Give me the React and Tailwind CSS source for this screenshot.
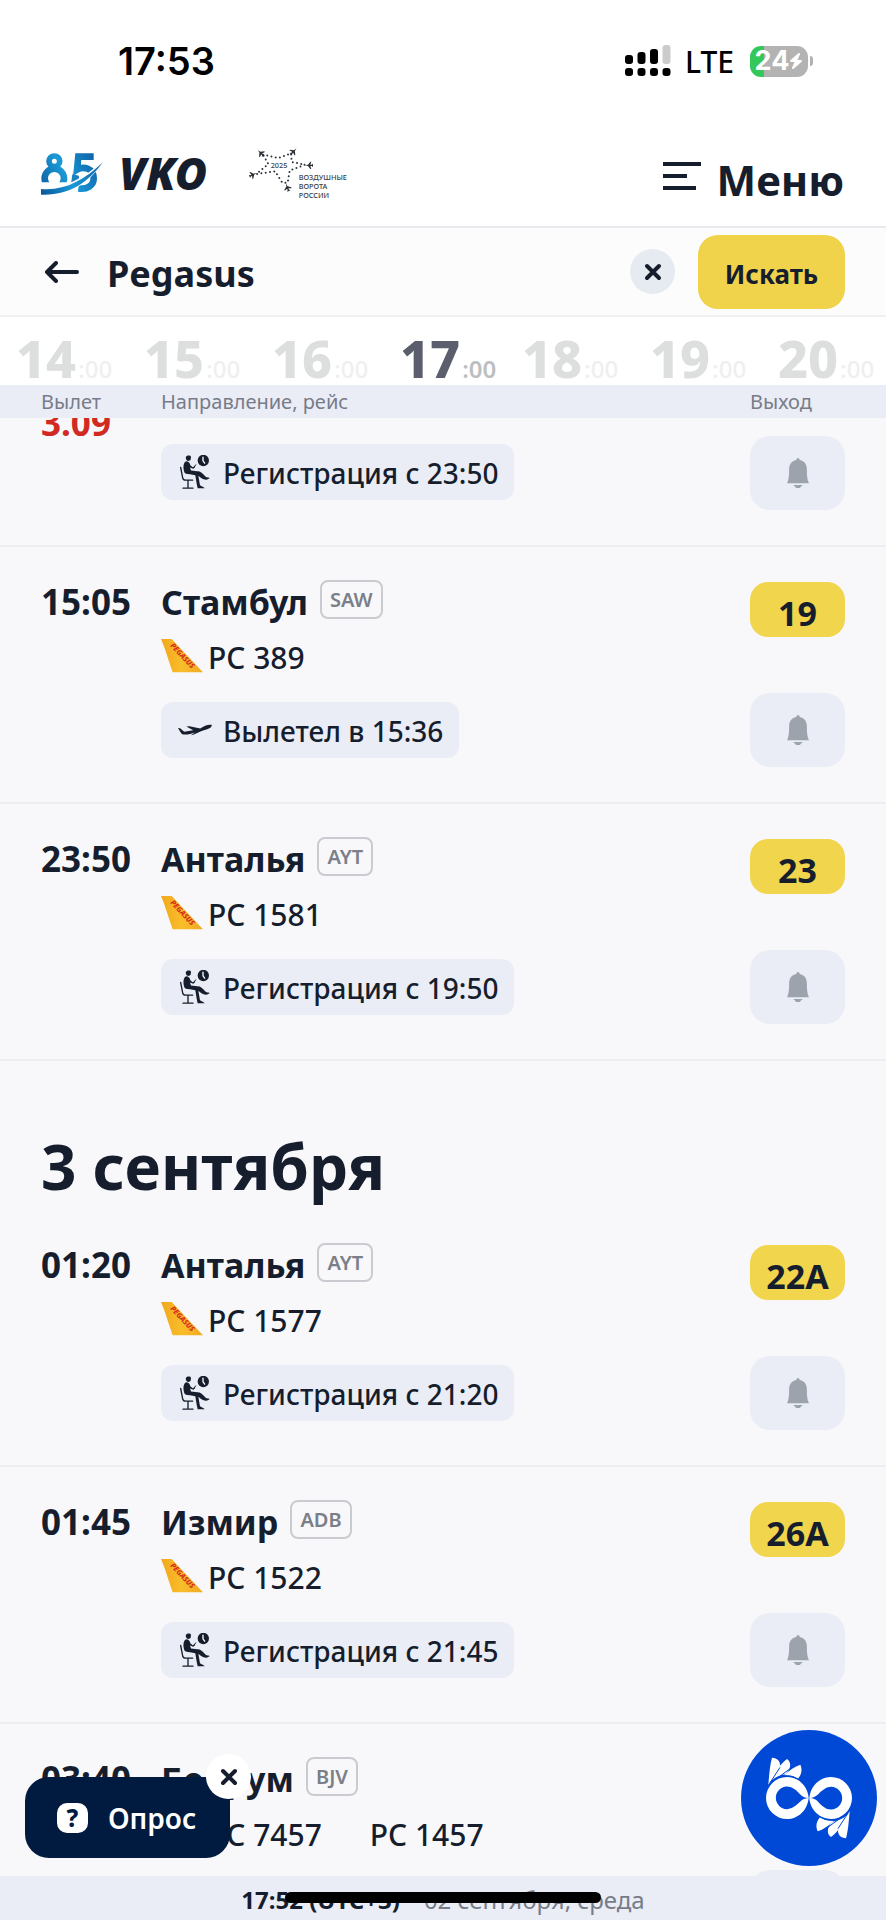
import React from 'react';
import { FaBolt } from 'react-icons/fa6';

const days = [
  {
    title: null,
    flights: [
      { time: '15:05', city: 'Стамбул', code: 'SAW', numbers: ['PC 389'], status: 'Вылетел в 15:36', departed: true, gate: '19' },
      { time: '23:50', city: 'Анталья', code: 'AYT', numbers: ['PC 1581'], status: 'Регистрация с 19:50', gate: '23' }
    ]
  },
  {
    title: '3 сентября',
    flights: [
      { time: '01:20', city: 'Анталья', code: 'AYT', numbers: ['PC 1577'], status: 'Регистрация с 21:20', gate: '22A' },
      { time: '01:45', city: 'Измир', code: 'ADB', numbers: ['PC 1522'], status: 'Регистрация с 21:45', gate: '26A' },
      { time: '03:40', city: 'Бодрум', code: 'BJV', numbers: ['PC 7457', 'PC 1457'] }
    ]
  }
];

const hours = [14, 15, 16, 17, 18, 19, 20];

const AnniversaryLogo = () => (
  <svg viewBox="0 0 186 126" className="h-[42px] w-[62px]" role="img" aria-label="85">
    <defs>
      <linearGradient id="logoBlue" gradientUnits="userSpaceOnUse" x1="0" y1="110" x2="170" y2="10">
        <stop offset="0" stopColor="#0b5c9e" />
        <stop offset="0.45" stopColor="#1b9ad6" />
        <stop offset="1" stopColor="#0d5fa6" />
      </linearGradient>
      <clipPath id="eightTop">
        <rect x="0" y="0" width="90" height="88" />
      </clipPath>
    </defs>
    <g fill="none" stroke="url(#logoBlue)">
      <g clipPath="url(#eightTop)">
        <circle cx="40" cy="25" r="16" strokeWidth="17" />
        <circle cx="40" cy="76" r="29" strokeWidth="20" />
      </g>
      <path d="M158 11 H112 L108 50 C128 38 158 46 158 76 C158 98 138 110 112 106" strokeWidth="20" />
    </g>
    <path d="M94 64 L114 68 C112 78 116 84 124 86 L90 94 Z" fill="#1b7fc0" />
    <path d="M0 102 C70 110 126 80 186 26 C140 90 88 128 0 126 Z" fill="#fff" stroke="#fff" strokeWidth="4" />
    <path d="M0 108 C70 114 126 84 186 28 C140 88 88 128 0 125 Z" fill="url(#logoBlue)" />
  </svg>
);

const planes = [
  [35, 15, -45],
  [134, 10, 45],
  [180, 52, -90],
  [12, 80, 65],
  [115, 118, -20]
];

const StarLogo = () => (
  <svg viewBox="0 0 300 156" className="h-[52px] w-[100px]" role="img" aria-label="2025 Воздушные ворота России">
    <path
      d="M42 20 L88 30 L126 16 L128 42 L168 50 L122 68 L116 104 L100 104 L78 70 L22 78 L58 48 Z"
      fill="none"
      stroke="#2b3038"
      strokeWidth="6"
      strokeLinecap="round"
      strokeDasharray="0 13"
    />
    {planes.map(([x, y, angle]) => (
      <path
        key={x}
        d="M0 -12 L2 -3 L11 4 V7 L2 4 L2 8 L5 12 H-5 L-2 8 L-2 4 L-11 7 V4 L-2 -3 Z"
        transform={`translate(${x} ${y}) rotate(${angle})`}
        fill="#2b3038"
      />
    ))}
    <g fill="#3a3f47" fontFamily="Noto Sans, sans-serif" fontWeight="500">
      <text x="65" y="60" fontSize="22">2025</text>
      <text x="149" y="95" fontSize="22">ВОЗДУШНЫЕ</text>
      <text x="149" y="122" fontSize="22">ВОРОТА</text>
      <text x="149" y="150" fontSize="22">РОССИИ</text>
    </g>
  </svg>
);

const SeatIcon = () => (
  <svg viewBox="0 0 90 104" className="h-[35px] w-[30px] shrink-0" aria-hidden="true">
    <g fill="#161e2e">
      <path d="M18 5 C21 0 32 0 33 5 L32 13 C30 17 26 18 22 17 C18 14 16 9 18 5 Z" />
      <path d="M18 18 C10 23 9 34 12 48 C13 55 20 57 30 57 L46 60 L50 86 L53 99 H74 C73 95 64 94 60 90 L55 62 C64 70 70 74 80 74 L89 69 C86 66 81 68 77 65 C68 54 62 48 52 48 L33 46 L30 37 L40 41 L46 35 L43 33 L38 36 L31 30 C30 23 26 18 18 18 Z" />
      <circle cx="70" cy="16" r="17" />
    </g>
    <g fill="none" stroke="#161e2e" strokeLinecap="round" strokeLinejoin="round">
      <path d="M2 37 L8 68 C9 73 12 75 17 75 H38" strokeWidth="4" />
      <path d="M24 76 V96 M9 99 H39" strokeWidth="4" />
      <path d="M41 38 L47 29" strokeWidth="3" />
    </g>
    <path d="M69 6 V17 L74 24" fill="none" stroke="#fff" strokeWidth="4" strokeLinecap="round" />
  </svg>
);

const DepartedIcon = () => (
  <svg viewBox="0 0 98 34" className="h-3 w-[34px] shrink-0" aria-hidden="true">
    <path
      d="M0 11 L6 12 L18 22 L44 18 L24 7 L33 6 L64 13 C76 5 86 0 97 2 C99 7 92 12 84 15 L68 20 L44 31 L37 32 L49 24 C36 29 22 32 12 29 C8 25 4 17 0 11 Z"
      fill="#161e2e"
    />
  </svg>
);

const PegasusTail = () => (
  <svg viewBox="0 0 126 102" className="h-[34px] w-[42px] shrink-0" role="img" aria-label="Pegasus">
    <defs>
      <linearGradient id="tail" x1="0" y1="0" x2="1" y2="0">
        <stop offset="0" stopColor="#f2a81d" />
        <stop offset="0.5" stopColor="#f9bd2b" />
        <stop offset="1" stopColor="#efaa22" />
      </linearGradient>
    </defs>
    <path d="M0 0 H32 L126 100 H35 C22 64 14 32 0 0 Z" fill="url(#tail)" />
    <text
      x="27"
      y="21"
      transform="rotate(47 27 21)"
      fontSize="22"
      fontWeight="800"
      fontStyle="italic"
      fontFamily="Noto Sans, sans-serif"
      fill="#d92a1c"
    >
      PEGASUS
    </text>
  </svg>
);

const BellButton = () => (
  <button
    type="button"
    aria-label="Уведомить"
    className="flex h-[74px] w-full items-center justify-center rounded-[20px] bg-[#eaedf6]"
  >
    <svg viewBox="0 0 64 88" className="h-[30px] w-[22px]" aria-hidden="true">
      <path
        d="M32 0 C35 0 37 3 37 6 C52 9 58 20 58 34 C58 52 59 64 64 74 H0 C5 64 6 52 6 34 C6 20 12 9 27 6 C27 3 29 0 32 0 Z M18 79 H46 C43 83 39 83 38 88 H26 C25 83 21 83 18 79 Z"
        fill="#9da3ad"
      />
    </svg>
  </button>
);

const CloseIcon = () => (
  <svg viewBox="0 0 18 18" className="h-[18px] w-[18px]" aria-hidden="true">
    <path d="M3 3 L15 15 M15 3 L3 15" stroke="currentColor" strokeWidth="4" strokeLinecap="round" />
  </svg>
);

const StatusChip = ({ text, departed }) => (
  <div className="flex h-14 w-fit items-center gap-2.5 rounded-xl bg-[#eaedf6] px-4">
    <span className="flex w-9 items-center justify-center">{departed ? <DepartedIcon /> : <SeatIcon />}</span>
    <span className="pt-0.5 text-[28px] leading-8 font-medium">{text}</span>
  </div>
);

const FlightRow = ({ flight }) => (
  <li className="grid h-[257px] grid-cols-[120px_1fr_95px] border-b-2 border-[#edeef2] px-[41px] pt-[35px]">
    <time className="text-[35px] leading-10 font-bold">{flight.time}</time>
    <div>
      <div className="flex items-start gap-3">
        <h3 className="text-[34px] leading-10 font-bold">{flight.city}</h3>
        <span className="-mt-0.5 flex h-[39px] items-center rounded-lg border-2 border-[#c9cbd0] px-2 text-xl font-semibold text-[#7b7f88]">
          {flight.code}
        </span>
      </div>
      <div className="mt-3.5 flex h-10 items-center gap-12">
        {flight.numbers.map((number, i) => (
          <span key={number} className="flex items-center gap-[5px] text-[30px] leading-10 font-medium">
            {i === 0 && <PegasusTail />}
            <span className="pt-1">{number}</span>
          </span>
        ))}
      </div>
      {flight.status && (
        <div className="mt-[26px]">
          <StatusChip text={flight.status} departed={flight.departed} />
        </div>
      )}
    </div>
    <div>
      <div className="mb-14 flex h-[55px] items-center justify-center rounded-[18px] bg-[#f1d54c] pt-1.5 text-[34px] leading-10 font-bold">
        {flight.gate}
      </div>
      <BellButton />
    </div>
  </li>
);

const StatusBar = () => (
  <div className="flex h-[122px] items-center justify-between pr-[73px] pl-[118px] font-['Inter',sans-serif] text-black">
    <span className="text-[38px] font-semibold">17:53</span>
    <div className="flex items-center">
      <svg viewBox="0 0 46 32" className="h-8 w-[46px]" aria-hidden="true">
        <rect x="0" y="10" width="8" height="9" rx="3" />
        <rect x="12.5" y="7" width="8" height="12" rx="3" />
        <rect x="25" y="4" width="8" height="15" rx="3" />
        <rect x="37.5" y="0" width="8" height="19" rx="3" fill="#cbcbcb" />
        {[0, 12.5, 25, 37.5].map((x) => (
          <rect key={x} x={x} y="23" width="8" height="8" rx="3" />
        ))}
      </svg>
      <span className="ml-3.5 font-['Noto_Sans',sans-serif] text-[30px] font-medium">LTE</span>
      <div className="ml-4 flex h-[31px] w-[58px] items-center justify-center rounded-[11px] bg-[linear-gradient(90deg,#34c759_24%,#b3b3b3_24%)] text-[27px] font-bold text-white">
        24
        <FaBolt className="h-5 w-3.5" />
      </div>
      <div className="ml-0.5 h-2.5 w-[3px] rounded-r-full bg-[#b3b3b3]" />
    </div>
  </div>
);

const AssistantButton = () => (
  <button
    type="button"
    aria-label="Ассистент"
    className="absolute right-[9px] bottom-[54px] h-[136px] w-[136px] rounded-full bg-[#0049d6]"
  >
    <svg viewBox="0 0 408 408" aria-hidden="true">
      <g id="hand">
        <path
          fillRule="evenodd"
          fill="#fff"
          d="M203 203 C200 168 172 141 138 141 A63 63 0 1 0 138 267 C172 267 200 240 203 203 Z M202 204 C180 204 176 188 161 178 A34 34 0 1 0 161 229 C176 219 180 206 202 204 Z"
        />
        <path d="M82 164 C85 132 86 108 93 83 C116 85 122 101 113 122 Z" fill="#fff" />
        <path d="M90 153 C103 124 117 103 138 87 C154 98 148 120 133 133 C116 136 101 142 90 153 Z" fill="#fff" />
        <path d="M130 136 C146 120 161 110 178 104 C185 119 181 135 171 146 C158 137 145 134 130 136 Z" fill="#fff" />
        <path d="M86 160 L117 112 M112 142 L153 112 M84 166 C98 144 118 136 140 138 C154 139 164 143 172 148" fill="none" stroke="#0049d6" strokeWidth="3" />
      </g>
      <use href="#hand" transform="rotate(180 204 204)" />
    </svg>
  </button>
);

export default function App() {
  return (
    <div className="relative flex h-screen flex-col overflow-hidden bg-[#f8f8fb] font-['Noto_Sans',sans-serif] text-[#161e2e]">
      <div className="bg-white">
        <StatusBar />

        <header className="flex h-[106px] items-start justify-between border-b-2 border-[#e9eaee] pt-[22px] pr-[42px] pl-[41px]">
          <a href="#home" className="flex items-start pt-1">
            <span className="pt-[5px]"><AnniversaryLogo /></span>
            <span className="ml-4 text-[44px] leading-[50px] font-black italic">VKO</span>
            <span className="ml-[42px]"><StarLogo /></span>
          </a>
          <button type="button" className="flex items-center gap-4">
            <svg viewBox="0 0 38 28" className="h-7 w-[38px]" aria-hidden="true">
              <path d="M0 2 H38 M0 14 H24 M0 26 H33" stroke="currentColor" strokeWidth="4" />
            </svg>
            <span className="pt-2 text-[42px] leading-[56px] font-bold">Меню</span>
          </button>
        </header>

        <form className="flex h-[89px] items-center border-b-2 border-[#f0f0f3] bg-[#fcfcfd] pr-[41px] pl-[45px]">
          <button type="button" aria-label="Назад">
            <svg viewBox="0 0 34 22" className="h-[22px] w-[34px]" aria-hidden="true">
              <path
                d="M32 11 H3 M11 2 L2 11 L11 20"
                fill="none"
                stroke="currentColor"
                strokeWidth="4"
                strokeLinecap="round"
                strokeLinejoin="round"
              />
            </svg>
          </button>
          <input
            aria-label="Поиск рейса"
            defaultValue="Pegasus"
            className="ml-7 h-14 min-w-0 flex-1 bg-transparent pt-1 text-[36px] font-bold outline-none"
          />
          <button
            type="button"
            aria-label="Очистить"
            className="flex h-[45px] w-[45px] items-center justify-center rounded-full bg-[#e6eaf1]"
          >
            <CloseIcon />
          </button>
          <button type="button" className="ml-[23px] h-[74px] w-[147px] rounded-[20px] bg-[#f0d34b] pt-1.5 text-[26px] font-bold">
            Искать
          </button>
        </form>

        <div className="flex h-[68px] items-end pl-4">
          {hours.map((hour) => (
            <button
              key={hour}
              type="button"
              className={
                hour === 17
                  ? 'flex w-[122px] shrink-0 items-baseline gap-0.5 text-[#5b5f6d]'
                  : 'flex w-[128px] shrink-0 items-baseline gap-0.5 text-[#dddfdf]'
              }
            >
              <span className="text-[52px] leading-[54px] font-extrabold">{hour}</span>
              <span className={hour === 17 ? 'text-2xl font-semibold text-[#bcbfc1]' : 'text-2xl font-medium text-[#efefef]'}>:00</span>
            </button>
          ))}
        </div>

        <div className="grid h-[33px] grid-cols-[120px_1fr_95px] items-center bg-[#eaedf6] px-[41px] text-xl text-[#777c88]">
          <span>Вылет</span>
          <span>Направление, рейс</span>
          <span>Выход</span>
        </div>
      </div>

      <main className="min-h-0 flex-1 overflow-hidden">
        <div className="grid grid-cols-[120px_1fr_95px] border-b-2 border-[#edeef2] px-[41px] pb-[35px]">
          <time className="-mt-[15px] text-[35px] leading-10 font-bold text-[#d02a22]">3.09</time>
          <div className="pt-[26px]">
            <StatusChip text="Регистрация с 23:50" />
          </div>
          <div className="pt-[18px]">
            <BellButton />
          </div>
        </div>

        {days.map((day, i) => (
          <section key={i}>
            {day.title && <h2 className="flex h-[149px] items-end px-[41px] pb-3 text-[62px] leading-[64px] font-bold">{day.title}</h2>}
            <ul>
              {day.flights.map((flight) => (
                <FlightRow key={flight.time} flight={flight} />
              ))}
            </ul>
          </section>
        ))}
      </main>

      <footer className="flex h-11 shrink-0 items-center justify-center gap-6 bg-[#eaedf6] pt-1 text-2xl">
        <span className="font-bold">17:52 (UTC+3)</span>
        <span className="text-[#777c88]">02 сентября, среда</span>
      </footer>

      <button
        type="button"
        className="absolute bottom-[62px] left-[25px] flex h-[81px] w-[205px] items-center rounded-[24px] bg-[#001a40] pl-8 text-[28px] font-semibold text-white"
      >
        <span className="flex h-[30px] w-[31px] items-center justify-center rounded-[10px] bg-white text-2xl leading-7 font-extrabold text-[#001a40]">
          ?
        </span>
        <span className="ml-5">Опрос</span>
      </button>
      <button
        type="button"
        aria-label="Закрыть"
        className="absolute bottom-[121px] left-[206px] flex h-[45px] w-[45px] items-center justify-center rounded-full bg-white"
      >
        <CloseIcon />
      </button>

      <AssistantButton />

      <div className="absolute inset-x-0 bottom-[17px] mx-auto h-[11px] w-[316px] rounded-full bg-black" />
    </div>
  );
}
